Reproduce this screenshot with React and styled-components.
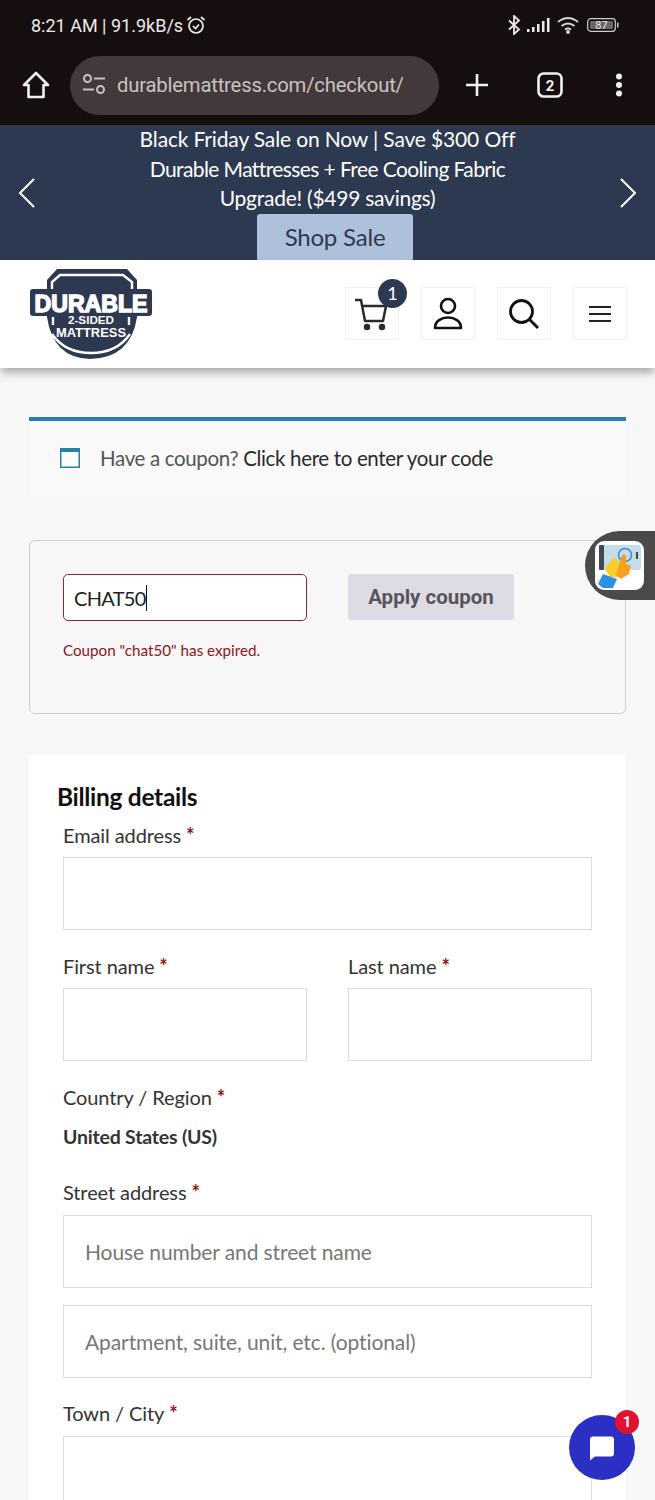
import React from 'react';
import styled, { createGlobalStyle } from 'styled-components';

const Global = createGlobalStyle`
  html, body { margin: 0; padding: 0; background: #f7f7f8; }
  * { box-sizing: border-box; }
`;

const Page = styled.div`
  position: relative;
  width: 655px;
  height: 1500px;
  overflow: hidden;
  background: #f7f7f8;
  font-family: Lato, "Open Sans", sans-serif;
  color: #222;
`;

const Chrome = styled.div`
  height: 126px;
  background: #160e0e;
  border-bottom: 1px solid #3b3436;
`;

const StatusBar = styled.div`
  display: flex;
  align-items: center;
  justify-content: space-between;
  height: 50px;
  padding: 0 36px 0 31px;
  color: #eeeaea;
  font-family: Roboto, sans-serif;
  font-size: 18px;
`;

const StatusGroup = styled.div`
  display: flex;
  align-items: center;
  gap: ${({ gap = 3 }) => gap}px;
`;

const BrowserBar = styled.div`
  display: flex;
  align-items: center;
  height: 75px;
  padding: 0 0 5px 22px;
`;

const UrlPill = styled.div`
  display: flex;
  align-items: center;
  gap: 11px;
  width: 369px;
  height: 59px;
  margin-left: 20px;
  padding-left: 12px;
  border-radius: 30px;
  background: #43383a;
  color: #c9c2c2;
  font-family: Roboto, sans-serif;
  font-size: 20.3px;
  letter-spacing: -0.2px;
`;

const BarIcon = styled.div`
  display: flex;
  align-items: center;
  justify-content: center;
  margin-left: ${({ left = 0 }) => left}px;
`;

const Banner = styled.div`
  display: flex;
  align-items: center;
  justify-content: space-between;
  height: 134px;
  padding: 0 17px;
  background: #2c3950;
  overflow: hidden;
`;

const BannerBody = styled.div`
  display: flex;
  flex-direction: column;
  align-items: center;
  align-self: flex-start;
  margin-top: -2px;
  color: #fff;
  font-size: 21px;
  line-height: 29.5px;
  text-align: center;
`;

const BannerLine = styled.div`
  letter-spacing: ${({ tracking = 0 }) => tracking}px;
`;

const ShopButton = styled.div`
  width: 156px;
  height: 47px;
  margin: 1px 0 0 15px;
  border-radius: 3px;
  background: #aec0da;
  color: #2c3950;
  font-size: 24px;
  line-height: 45px;
  letter-spacing: -0.2px;
`;

const SiteHeader = styled.div`
  position: relative;
  display: flex;
  align-items: center;
  justify-content: space-between;
  height: 108px;
  padding: 0 28px 0 29px;
  background: #fff;
  box-shadow: 0 6px 8px -1px rgba(0, 0, 0, 0.3);
`;

const HeaderIcons = styled.div`
  display: flex;
  gap: 22px;
  margin-top: -1px;
`;

const IconBox = styled.div`
  position: relative;
  display: flex;
  align-items: center;
  justify-content: center;
  width: 54px;
  height: 53px;
  border: 1px solid #f0f0f0;
  background: #fff;
`;

const CartCount = styled.span`
  position: absolute;
  top: -9px;
  right: -9px;
  width: 29px;
  height: 29px;
  border-radius: 50%;
  background: #2c3950;
  color: #fff;
  font-size: 18px;
  line-height: 29px;
  text-align: center;
`;

const Main = styled.div`
  padding: 49px 29px 0;
`;

const Notice = styled.div`
  display: flex;
  align-items: center;
  gap: 20px;
  height: 80px;
  padding: 0 0 3px 31px;
  border-top: 4px solid #2b7ea8;
  background: #f9f9fa;
  color: #555;
  font-size: 20.5px;
  letter-spacing: -0.34px;
`;

const NoticeLink = styled.span`
  color: #2a2a2a;
`;

const CouponBox = styled.div`
  height: 174px;
  margin-top: 43px;
  padding: 33px 33px 0;
  border: 1px solid #cfcfd3;
  border-radius: 6px;
`;

const CouponRow = styled.div`
  display: flex;
  gap: 41px;
`;

const CouponInput = styled.div`
  display: flex;
  align-items: center;
  width: 244px;
  height: 47px;
  padding-left: 10px;
  border: 1px solid #8e2530;
  border-radius: 5px;
  background: #fff;
  color: #222;
  font-size: 20px;
  letter-spacing: -0.7px;
`;

const Caret = styled.span`
  width: 1px;
  height: 26px;
  background: #111;
`;

const ApplyButton = styled.div`
  width: 166px;
  height: 46px;
  border-radius: 3px;
  background: #dfdbe5;
  color: #57545c;
  font-family: Roboto, sans-serif;
  font-size: 20.5px;
  font-weight: 700;
  line-height: 46px;
  text-align: center;
`;

const CouponError = styled.div`
  margin-top: 20px;
  color: #8e1420;
  font-size: 15.2px;
`;

const BillingCard = styled.div`
  margin-top: 41px;
  padding: 26px 34px 0;
  background: #fff;
`;

const BillingTitle = styled.h3`
  margin: 0 0 0 -6px;
  color: #111;
  font-size: 24.5px;
  font-weight: 700;
  letter-spacing: -0.3px;
  line-height: 32px;
`;

const FieldGrid = styled.div`
  display: grid;
  grid-template-columns: 244px 244px;
  column-gap: 41px;
`;

const Field = styled.div`
  grid-column: ${({ wide }) => (wide ? '1 / -1' : 'auto')};
  margin-top: ${({ top = 0 }) => top}px;
`;

const Label = styled.div`
  height: 29px;
  color: #333;
  font-size: 20px;
  letter-spacing: -0.1px;
  line-height: 27px;
`;

const Required = styled.span`
  margin-left: 5px;
  color: #8e1420;
  font-weight: 700;
`;

const Input = styled.div`
  height: 73px;
  margin-top: ${({ top = 6 }) => top}px;
  padding-left: 21px;
  border: 1px solid #dcdcdf;
  background: #fff;
  color: #777;
  font-size: 21px;
  letter-spacing: -0.1px;
  line-height: 71px;
`;

const CountryValue = styled.div`
  height: 29px;
  margin-top: 10px;
  color: #333;
  font-size: 19.5px;
  font-weight: 700;
  letter-spacing: -0.2px;
  line-height: 27px;
`;

const FloatWidget = styled.div`
  position: absolute;
  top: 531px;
  left: 585px;
  display: flex;
  align-items: center;
  width: 80px;
  height: 69px;
  padding-left: 10px;
  border-radius: 35px 0 0 35px;
  background: #4a4a4a;
`;

const ChatBubble = styled.div`
  position: absolute;
  top: 1415px;
  left: 569px;
  display: flex;
  align-items: center;
  justify-content: center;
  width: 66px;
  height: 65px;
  border-radius: 50%;
  background: #2b2fc4;
`;

const ChatCount = styled.span`
  position: absolute;
  top: -5px;
  right: -4px;
  width: 24px;
  height: 24px;
  border-radius: 50%;
  background: #e0122f;
  color: #fff;
  font-family: Roboto, sans-serif;
  font-size: 15px;
  font-weight: 700;
  line-height: 24px;
  text-align: center;
`;

function Logo() {
  return (
    <svg width="124" height="92" viewBox="0 0 124 92">
      <path d="M28 1 L98 1 L108 12 L108 49 Q102 90 61 91 Q24 90 18 49 L18 12 Z" fill="#2c3950" />
      <path d="M23 21 L23 14 L31 7 L94 7 L103 14 L103 21" fill="none" stroke="#fff" strokeWidth="2.400" />
      <path d="M23 66 Q36 85 62 85 Q88 85 101 66" fill="none" stroke="#fff" strokeWidth="2.400" />
      <path d="M24 49 L24 57 M100 49 L100 57" stroke="#fff" strokeWidth="2.400" />
      <rect x="1" y="21" width="122" height="27" rx="3" fill="#2c3950" />
      <text x="62" y="44" textAnchor="middle" fontFamily="Liberation Sans" fontWeight="700" fontSize="24" fill="#fff" stroke="#fff" strokeWidth="1.500" textLength="113" lengthAdjust="spacingAndGlyphs">DURABLE</text>
      <text x="62" y="56" textAnchor="middle" fontFamily="Liberation Sans" fontWeight="700" fontSize="11" fill="#fff" textLength="46" lengthAdjust="spacingAndGlyphs">2-SIDED</text>
      <text x="62" y="69" textAnchor="middle" fontFamily="Liberation Sans" fontWeight="700" fontSize="13.500" fill="#fff" textLength="70" lengthAdjust="spacingAndGlyphs">MATTRESS</text>
    </svg>
  );
}

export default function App() {
  return (
    <Page>
      <Global />
      <Chrome>
        <StatusBar>
          <StatusGroup gap={3}>
            <span>8:21 AM | 91.9kB/s</span>
            <svg width="20" height="20" viewBox="0 0 20 20" fill="none" stroke="#eeeaea" strokeWidth="1.700">
              <circle cx="10" cy="11" r="7" />
              <path d="M7 11l2.500 2.500L13 9.500M1.500 5L5 2M18.500 5L15 2" />
            </svg>
          </StatusGroup>
          <StatusGroup gap={6}>
            <svg width="13" height="20" viewBox="0 0 13 20" fill="none" stroke="#eeeaea" strokeWidth="1.800">
              <path d="M1 5.500l10 9-5 4.500V1l5 4.500-10 9" />
            </svg>
            <svg width="24" height="16" viewBox="0 0 24 16" fill="#eeeaea">
              <rect x="0" y="12" width="2.500" height="3" />
              <rect x="5" y="10" width="2.500" height="5" />
              <rect x="10" y="7" width="2.500" height="8" />
              <rect x="15" y="4" width="2.500" height="11" />
              <rect x="20" y="1" width="2.500" height="14" />
            </svg>
            <svg width="24" height="18" viewBox="0 0 24 18" fill="none" stroke="#d8d4d4" strokeWidth="2">
              <path d="M1 6q10-8 20 0M4.500 10q6.500-5 13 0M8 13.500q3-2 6 0" />
              <circle cx="11" cy="16" r="1" fill="#d8d4d4" />
            </svg>
            <svg width="32" height="14" viewBox="0 0 32 14">
              <rect x="0.700" y="0.700" width="27.600" height="12.600" rx="3" fill="none" stroke="#cfcaca" strokeWidth="1.200" />
              <rect x="3" y="3" width="23" height="8" rx="1" fill="#6a6464" />
              <rect x="30" y="4.500" width="1.500" height="5" fill="#cfcaca" />
              <text x="14.500" y="11" textAnchor="middle" fontFamily="Roboto" fontSize="11" fill="#eeeaea">87</text>
            </svg>
          </StatusGroup>
        </StatusBar>
        <BrowserBar>
          <svg width="28" height="28" viewBox="0 0 28 28" fill="none" stroke="#f2efef" strokeWidth="2.600" strokeLinejoin="round">
            <path d="M14 2 L26 14 L21.500 14 L21.500 26 L6.500 26 L6.500 14 L2 14 Z" />
          </svg>
          <UrlPill>
            <svg width="24" height="24" viewBox="0 0 24 24" fill="none" stroke="#c9c2c2" strokeWidth="2">
              <circle cx="5.500" cy="5.500" r="3.500" />
              <path d="M12 5.500h11M1 16.500h11" />
              <circle cx="18.500" cy="16.500" r="3.500" />
            </svg>
            <span>durablemattress.com/checkout/</span>
          </UrlPill>
          <BarIcon left={26}>
            <svg width="24" height="24" viewBox="0 0 24 24" stroke="#f2efef" strokeWidth="2.600">
              <path d="M12 1v22M1 12h22" />
            </svg>
          </BarIcon>
          <BarIcon left={48}>
            <svg width="26" height="26" viewBox="0 0 26 26">
              <rect x="1.500" y="1.500" width="23" height="23" rx="5" fill="none" stroke="#f2efef" strokeWidth="2.600" />
              <text x="13" y="19" textAnchor="middle" fontFamily="Roboto" fontWeight="700" fontSize="15" fill="#f2efef">2</text>
            </svg>
          </BarIcon>
          <BarIcon left={52}>
            <svg width="8" height="24" viewBox="0 0 8 24" fill="#f2efef">
              <circle cx="4" cy="3.500" r="3" />
              <circle cx="4" cy="12" r="3" />
              <circle cx="4" cy="20.500" r="3" />
            </svg>
          </BarIcon>
        </BrowserBar>
      </Chrome>

      <Banner>
        <svg width="20" height="30" viewBox="0 0 20 30" fill="none" stroke="#fff" strokeWidth="2">
          <path d="M17 1 L3 15 L17 29" />
        </svg>
        <BannerBody>
          <BannerLine tracking={-0.15}>Black Friday Sale on Now | Save $300 Off</BannerLine>
          <BannerLine tracking={-0.6}>Durable Mattresses + Free Cooling Fabric</BannerLine>
          <BannerLine tracking={-0.25}>Upgrade! ($499 savings)</BannerLine>
          <ShopButton>Shop Sale</ShopButton>
        </BannerBody>
        <svg width="20" height="30" viewBox="0 0 20 30" fill="none" stroke="#fff" strokeWidth="2">
          <path d="M3 1 L17 15 L3 29" />
        </svg>
      </Banner>

      <SiteHeader>
        <Logo />
        <HeaderIcons>
          <IconBox>
            <svg width="36" height="34" viewBox="0 0 36 34" fill="none" stroke="#2b2b2b" strokeWidth="2.500">
              <path d="M1 3h6l4 21h18l3-15H9" strokeLinejoin="round" />
              <circle cx="13" cy="30" r="2" fill="#2b2b2b" />
              <circle cx="28" cy="30" r="2" fill="#2b2b2b" />
            </svg>
            <CartCount>1</CartCount>
          </IconBox>
          <IconBox>
            <svg width="30" height="34" viewBox="0 0 30 34" fill="none" stroke="#111" strokeWidth="2.600">
              <circle cx="15" cy="9" r="7" />
              <path d="M2 31 C2 17 28 17 28 31 Z" strokeLinejoin="round" />
            </svg>
          </IconBox>
          <IconBox>
            <svg width="32" height="32" viewBox="0 0 32 32" fill="none" stroke="#111" strokeWidth="2.800">
              <circle cx="13.500" cy="13.500" r="11" />
              <path d="M21.500 21.500 L30 30" />
            </svg>
          </IconBox>
          <IconBox>
            <svg width="22" height="18" viewBox="0 0 22 18" stroke="#222" strokeWidth="2.200">
              <path d="M0 2h22M0 9h22M0 16h22" />
            </svg>
          </IconBox>
        </HeaderIcons>
      </SiteHeader>

      <Main>
        <Notice>
          <svg width="20" height="20" viewBox="0 0 20 20">
            <rect x="0.750" y="0.750" width="18.500" height="18.500" fill="#fff" stroke="#2b7ea8" strokeWidth="1.500" />
            <rect x="0" y="0" width="20" height="4" fill="#2b7ea8" />
          </svg>
          <span>
            Have a coupon? <NoticeLink>Click here to enter your code</NoticeLink>
          </span>
        </Notice>

        <CouponBox>
          <CouponRow>
            <CouponInput>
              CHAT50
              <Caret />
            </CouponInput>
            <ApplyButton>Apply coupon</ApplyButton>
          </CouponRow>
          <CouponError>Coupon "chat50" has expired.</CouponError>
        </CouponBox>

        <BillingCard>
          <BillingTitle>Billing details</BillingTitle>
          <FieldGrid>
            <Field wide top={9}>
              <Label>Email address<Required>*</Required></Label>
              <Input />
            </Field>
            <Field top={23}>
              <Label>First name<Required>*</Required></Label>
              <Input />
            </Field>
            <Field top={23}>
              <Label>Last name<Required>*</Required></Label>
              <Input />
            </Field>
            <Field wide top={23}>
              <Label>Country / Region<Required>*</Required></Label>
              <CountryValue>United States (US)</CountryValue>
            </Field>
            <Field wide top={27}>
              <Label>Street address<Required>*</Required></Label>
              <Input top={7}>House number and street name</Input>
              <Input top={17}>Apartment, suite, unit, etc. (optional)</Input>
            </Field>
            <Field wide top={22}>
              <Label>Town / City<Required>*</Required></Label>
              <Input top={7} />
            </Field>
          </FieldGrid>
        </BillingCard>
      </Main>

      <FloatWidget>
        <svg width="49" height="49" viewBox="0 0 49 49">
          <rect width="49" height="49" rx="9" fill="#fff" />
          <rect x="5" y="4" width="41" height="25" rx="3" fill="#c4dde8" />
          <rect x="4" y="4" width="5" height="25" rx="1" fill="#3f4a52" />
          <circle cx="30" cy="14" r="6.500" fill="none" stroke="#3a8fc9" strokeWidth="1.500" />
          <rect x="41" y="11" width="2" height="7" fill="#3f4a52" />
          <path d="M10 28 L19 16 L27 24 L25 36 L15 36 Z" fill="#fbce2c" />
          <path d="M21 34 L27 14 Q30 12 31 15 L31 23 L36 25 L34 33 L26 38 Z" fill="#f9a11f" />
          <path d="M3 43 L8 33 L22 38 L18 47 L8 47 Z" fill="#2f8fe3" />
        </svg>
      </FloatWidget>

      <ChatBubble>
        <svg width="26" height="26" viewBox="0 0 26 26" fill="#fff">
          <path d="M4 1.500h18a3 3 0 0 1 3 3v14a3 3 0 0 1-3 3H6l-5 4V4.500a3 3 0 0 1 3-3Z" />
        </svg>
        <ChatCount>1</ChatCount>
      </ChatBubble>
    </Page>
  );
}
